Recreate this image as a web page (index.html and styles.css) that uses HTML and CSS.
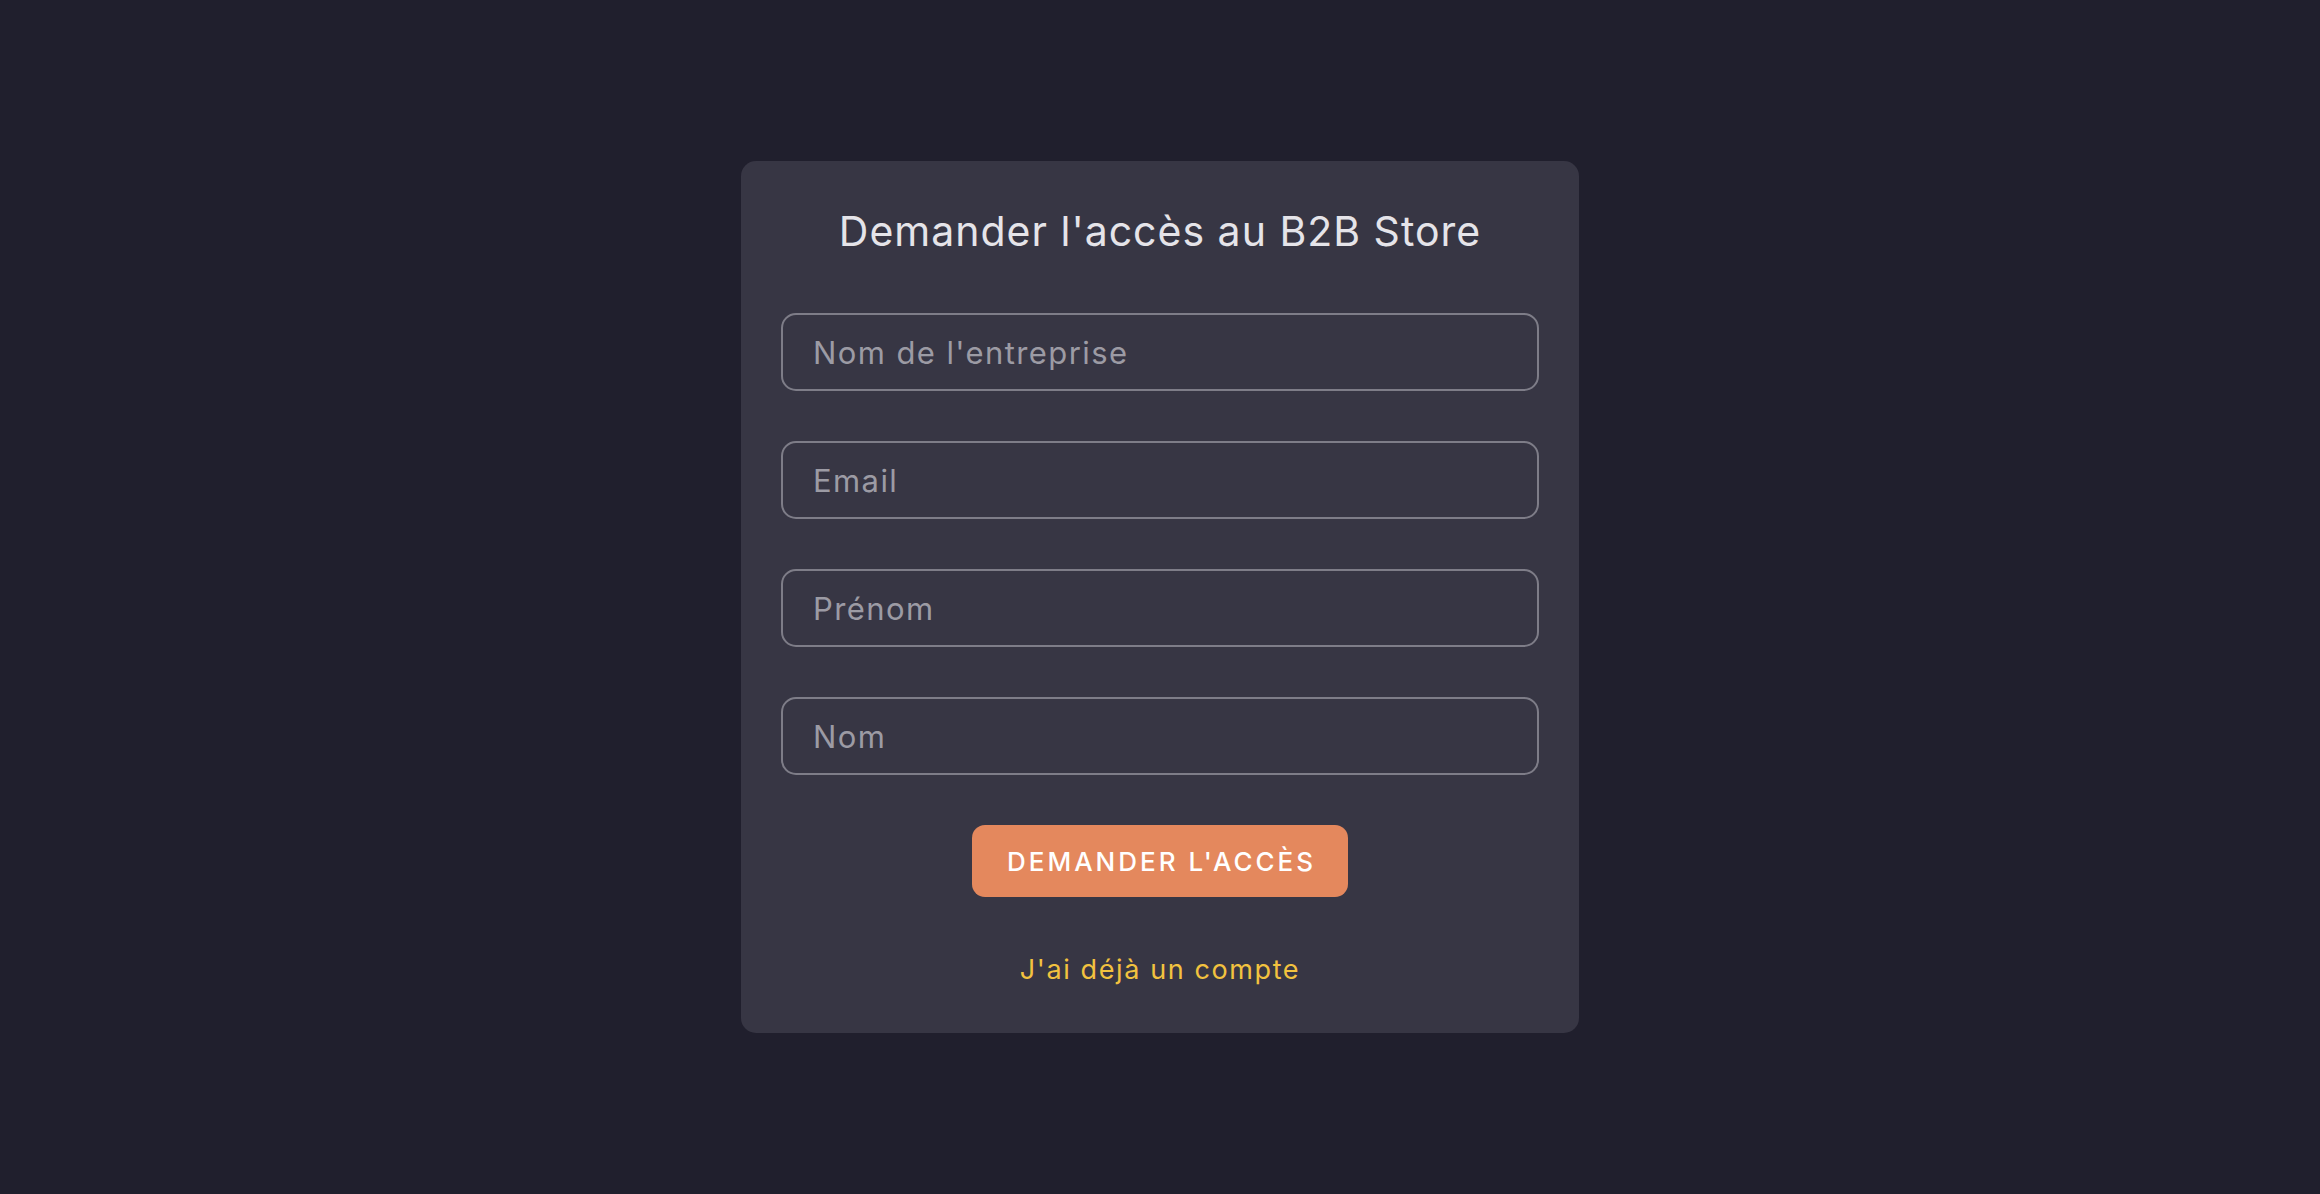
FILE: index.html
```html
<!DOCTYPE html>
<html lang="fr">
<head>
    <meta charset="UTF-8">
    <title>B2B Store - Demande d'accès</title>
    <link rel="stylesheet" href="styles.css">
</head>
<body>
    <div class="page">
        <form class="card">
            <h1 class="card-title">Demander l'accès au B2B Store</h1>
            <input class="field" type="text" placeholder="Nom de l'entreprise">
            <input class="field" type="email" placeholder="Email">
            <input class="field" type="text" placeholder="Prénom">
            <input class="field" type="text" placeholder="Nom">
            <button class="submit" type="button">Demander l'accès</button>
            <a class="login-link" href="#">J'ai déjà un compte</a>
        </form>
    </div>
</body>
</html>
```

FILE: styles.css
```css
body {
    margin: 0;
    background: #201f2d;
    font-family: Inter, "Noto Sans", sans-serif;
}
.page {
    min-height: 100vh;
    display: flex;
    align-items: center;
    justify-content: center;
}
.card {
    width: 838px;
    box-sizing: border-box;
    padding: 40px 40px 43px;
    background: #373644;
    border-radius: 15px;
}
.card-title {
    margin: 0 0 52px;
    font-size: 41px;
    font-weight: 400;
    line-height: 60px;
    letter-spacing: 1px;
    text-align: center;
    color: #e5e4e9;
}
.field {
    display: block;
    width: 100%;
    height: 78px;
    box-sizing: border-box;
    margin: 0 0 50px;
    padding: 0 30px;
    border: 2px solid #7e7d88;
    border-radius: 15px;
    background: transparent;
    font-family: inherit;
    font-size: 31px;
    letter-spacing: 1.4px;
    color: #e5e4e9;
}
.field::placeholder {
    color: #9c9ba4;
}
.submit {
    display: block;
    height: 72px;
    margin: 0 auto 53px;
    padding: 0 32px 0 35px;
    border: none;
    border-radius: 13px;
    background: #e4885d;
    color: #ffffff;
    font-family: inherit;
    font-size: 26px;
    font-weight: 500;
    letter-spacing: 3px;
    text-transform: uppercase;
}
.login-link {
    display: block;
    line-height: 40px;
    font-size: 27px;
    letter-spacing: 1.6px;
    text-align: center;
    text-decoration: none;
    color: #f2c23f;
}
```
